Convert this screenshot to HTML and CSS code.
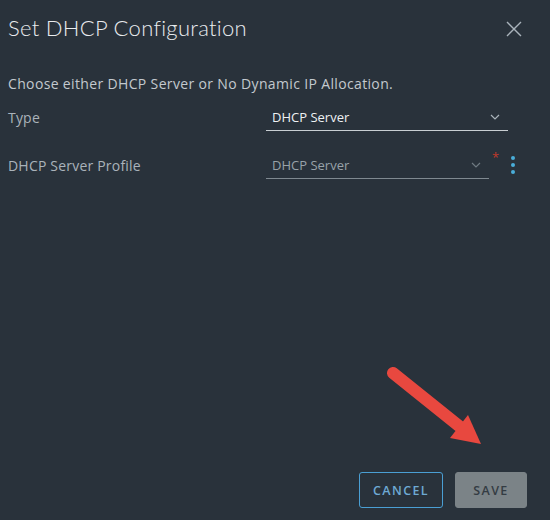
FILE: index.html
```html
<!DOCTYPE html>
<html>
<head>
  <title>Set DHCP Configuration</title>
  <link rel="stylesheet" href="styles.css">
</head>
<body>
  <div class="modal">
    <div class="modal-header">
      <h1>Set DHCP Configuration</h1>
      <button class="close" aria-label="Close">
        <svg width="16" height="16" viewBox="0 0 16 16"><path d="M1 1L15 15M15 1L1 15" stroke="#a9b3bb" stroke-width="1.4" fill="none"/></svg>
      </button>
    </div>

    <div class="modal-body">
      <p class="hint">Choose either DHCP Server or No Dynamic IP Allocation.</p>

      <div class="form-row">
        <label>Type</label>
        <div class="select select-type">
          <span>DHCP Server</span>
          <svg class="chevron" width="10" height="6" viewBox="0 0 10 6"><path d="M1 1L5 5L9 1" stroke="#aab4bb" stroke-width="1.2" fill="none"/></svg>
        </div>
      </div>

      <div class="form-row">
        <label>DHCP Server Profile</label>
        <div class="select select-profile">
          <span>DHCP Server</span>
          <svg class="chevron" width="10" height="6" viewBox="0 0 10 6"><path d="M1 1L5 5L9 1" stroke="#6f7a82" stroke-width="1.2" fill="none"/></svg>
        </div>
        <span class="required">*</span>
        <button class="more" aria-label="More">
          <svg width="6" height="20" viewBox="0 0 6 20"><circle cx="3" cy="3" r="2" fill="#4aaed9"/><circle cx="3" cy="10" r="2" fill="#4aaed9"/><circle cx="3" cy="17" r="2" fill="#4aaed9"/></svg>
        </button>
      </div>
    </div>

    <div class="modal-footer">
      <svg class="arrow" width="110" height="90" viewBox="0 0 110 90">
        <path d="M8 9L74 62" stroke="#e8483f" stroke-width="12" stroke-linecap="round" fill="none"/>
        <path d="M96 80L65 74L83 51Z" fill="#e8483f"/>
      </svg>
      <div class="buttons">
        <button class="btn btn-outline">CANCEL</button>
        <button class="btn btn-disabled">SAVE</button>
      </div>
    </div>
  </div>
</body>
</html>
```

FILE: styles.css
```css
body {
  margin: 0;
  background-color: #29323b;
  font-family: "Open Sans", Arial, sans-serif;
  color: #c5cbd0;
}

.modal {
  width: 550px;
  height: 520px;
  display: flex;
  flex-direction: column;
  box-sizing: border-box;
}

.modal-header {
  display: flex;
  justify-content: space-between;
  align-items: center;
  padding: 9px 28px 0 8px;
  height: 36px;
}

.modal-header h1 {
  margin: 0;
  font-family: Lato, sans-serif;
  font-weight: 300;
  font-size: 22px;
  color: #e9ecef;
  letter-spacing: 0.3px;
}

.close {
  background: none;
  border: none;
  padding: 0;
  width: 16px;
  height: 16px;
  margin-top: 4px;
}

.modal-body {
  padding: 0 8px;
  flex: 1;
}

.hint {
  margin: 29px 0 0;
  font-size: 14px;
  letter-spacing: 0.35px;
  color: #c3c9ce;
}

.form-row {
  display: flex;
  align-items: center;
  height: 30px;
  margin-top: 9px;
}

.form-row + .form-row {
  margin-top: 18px;
}

.form-row label {
  width: 258px;
  font-size: 14px;
  letter-spacing: 0.2px;
  color: #aab3ba;
}

.select {
  display: flex;
  justify-content: space-between;
  align-items: center;
  box-sizing: border-box;
  height: 28px;
  padding: 0 8px 0 6px;
  font-size: 13px;
}

.select-type {
  width: 242px;
  border-bottom: 1.5px solid #c8ced2;
  color: #eef1f3;
  font-weight: 500;
}

.select-profile {
  width: 223px;
  border-bottom: 1px solid #7f8990;
  color: #98a2a9;
}

.required {
  color: #c0392b;
  font-size: 13px;
  align-self: flex-start;
  margin: -2px 0 0 3px;
}

.more {
  background: none;
  border: none;
  padding: 0;
  margin: 0 0 0 11px;
  display: flex;
}

.modal-footer {
  position: relative;
  display: flex;
  justify-content: flex-end;
  padding: 0 23px 12px 0;
}

.arrow {
  position: absolute;
  left: 385px;
  top: -108px;
}

.buttons {
  display: flex;
  gap: 12px;
}

.btn {
  height: 36px;
  box-sizing: border-box;
  border-radius: 3px;
  font-family: "Open Sans", sans-serif;
  font-size: 12.5px;
  font-weight: 600;
  letter-spacing: 1.4px;
  padding: 0 12px;
}

.btn-outline {
  width: 84px;
  background: transparent;
  border: 1px solid #4a9fd3;
  color: #6eaad4;
}

.btn-disabled {
  width: 72px;
  background: #7b8387;
  border: 1px solid #7b8387;
  color: #343c43;
}
```
